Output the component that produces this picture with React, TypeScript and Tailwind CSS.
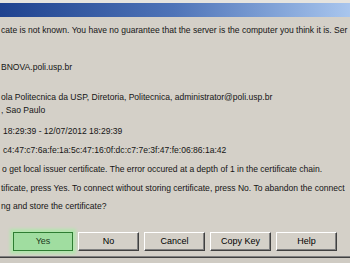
import React from "react";

const Btn = ({ label }: { label: string }) => (
  <div className="w-[61px] h-[19px] bg-[#d4d0c8] border-t border-l border-white border-b border-r border-b-[#404040] border-r-[#404040] shadow-[inset_-1px_-1px_0_#808080] flex items-center justify-center text-[9px] text-black">
    {label}
  </div>
);

export default function App() {
  return (
    <div
      className="w-[350px] h-[263px] bg-[#d4d0c8] overflow-hidden flex flex-col text-[8.55px] leading-[11px] text-[#151515]"
      style={{ fontFamily: '"Liberation Sans", Arial, sans-serif' }}
    >
      <div className="h-[3px] bg-[#e6e4df]" />
      <div className="h-[14px] bg-gradient-to-r from-[#1f428f] via-[#4f74b8] to-[#a9c6ee]" />
      <div className="flex flex-col whitespace-nowrap pl-[1px]">
        <div className="mt-[8px]">cate is not known. You have no guarantee that the server is the computer you think it is. Ser</div>
        <div className="mt-[26px]">BNOVA.poli.usp.br</div>
        <div className="mt-[19px]">ola Politecnica da USP, Diretoria, Politecnica, administrator@poli.usp.br</div>
        <div className="mt-[2px]">, Sao Paulo</div>
        <div className="mt-[10px] pl-[2px]">18:29:39 - 12/07/2012 18:29:39</div>
        <div className="mt-[8px] pl-[2px]">c4:47:c7:6a:fe:1a:5c:47:16:0f:dc:c7:7e:3f:47:fe:06:86:1a:42</div>
        <div className="mt-[8px] pl-[1px]">o get local issuer certificate. The error occured at a depth of 1 in the certificate chain.</div>
        <div className="mt-[8px]">tificate, press Yes. To connect without storing certificate, press No. To abandon the connect</div>
        <div className="mt-[7px]">ng and store the certificate?</div>
      </div>
      <div className="mt-[20px] pl-[13px] flex gap-[5px]">
        <div className="w-[60px] h-[19px] bg-[#a0dda0] border border-[#2e7d32] shadow-[0_0_3px_3px_#b2e6ad] flex items-center justify-center text-[9px] text-[#1d3b1d]">
          Yes
        </div>
        <Btn label="No" />
        <Btn label="Cancel" />
        <Btn label="Copy Key" />
        <Btn label="Help" />
      </div>
      <div className="mt-[5px] h-px bg-[#808080]" />
      <div className="h-px bg-[#404040]" />
      <div className="flex-1 bg-[#cfcbc3]" />
    </div>
  );
}
